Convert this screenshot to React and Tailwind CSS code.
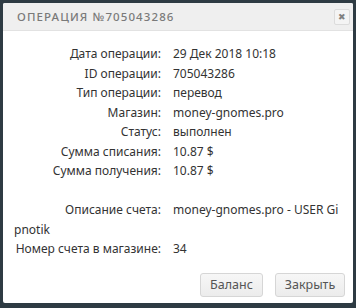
export default function App() {
  const rows = [
    ['Дата операции:', '29 Дек 2018 10:18'],
    ['ID операции:', '705043286'],
    ['Тип операции:', 'перевод'],
    ['Магазин:', 'money-gnomes.pro'],
    ['Статус:', 'выполнен'],
    ['Сумма списания:', '10.87 $'],
    ['Сумма получения:', '10.87 $'],
  ]

  return (
    <div className="w-[356px] h-[308px] bg-[#2e3b43] p-[3px] pb-[5px]" style={{ fontFamily: '"Noto Sans", "Open Sans", sans-serif' }}>
      <div className="h-full bg-white rounded-[2px] flex flex-col overflow-hidden">
        <div className="h-[28px] bg-[#efefef] border-b border-[#e2e2e2] flex items-center justify-between pl-[14px] pr-[3px]">
          <span className="text-[11.5px] font-medium tracking-[1.1px] text-[#7a7a7a] uppercase">Операция №705043286</span>
          <button className="w-[16px] h-[16px] border border-[#dcdcdc] bg-[#f4f4f4] rounded-[2px] flex items-center justify-center text-[9px] leading-none text-[#808080]">
            ✖
          </button>
        </div>

        <div className="flex-1 pl-[11px] pt-[13px] text-[12px] text-[#333] leading-[19.5px]">
          {rows.map(([label, value]) => (
            <div key={label} className="flex">
              <span className="w-[147px] text-right shrink-0">{label}</span>
              <span className="ml-[12px]">{value}</span>
            </div>
          ))}
          <div className="h-[19.5px]" />
          <div>
            <span className="inline-block w-[147px] text-right">Описание счета:</span>
            <span className="ml-[12px]">money-gnomes.pro - USER Gi</span>
            <br />
            pnotik
          </div>
          <div className="flex">
            <span className="w-[147px] text-right shrink-0">Номер счета в магазине:</span>
            <span className="ml-[12px]">34</span>
          </div>
        </div>

        <div className="flex justify-end gap-[12px] pr-[8px] pb-[6px]">
          <button className="w-[63px] h-[24px] rounded-[3px] border border-[#d6d6d6] bg-gradient-to-b from-[#f7f7f7] to-[#ececec] text-[12.5px] text-[#555]">
            Баланс
          </button>
          <button className="w-[70px] h-[24px] rounded-[3px] border border-[#d6d6d6] bg-gradient-to-b from-[#f7f7f7] to-[#ececec] text-[12.5px] text-[#555]">
            Закрыть
          </button>
        </div>
      </div>
    </div>
  )
}
